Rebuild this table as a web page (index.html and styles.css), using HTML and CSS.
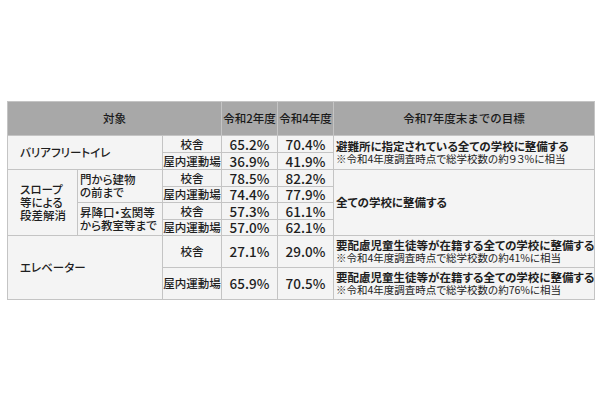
FILE: index.html
```html
<!DOCTYPE html>
<html lang="ja">
<head>
<meta charset="utf-8">
<link rel="stylesheet" href="styles.css">
</head>
<body>
<div class="wrap">
<table class="tbl">
  <colgroup>
    <col class="c1"><col class="c2"><col class="c3"><col class="c4"><col class="c5"><col class="c6">
  </colgroup>
  <thead>
    <tr class="hd">
      <th colspan="3">対象</th>
      <th>令和2年度</th>
      <th>令和4年度</th>
      <th>令和7年度末までの目標</th>
    </tr>
  </thead>
  <tbody>
    <tr class="r17">
      <td colspan="2" rowspan="2" class="lbl">バリアフリートイレ</td>
      <td class="sub">校舎</td>
      <td class="pct">65.2%</td>
      <td class="pct">70.4%</td>
      <td rowspan="2" class="goal"><div class="main">避難所に指定されている全ての学校に整備する</div><div class="note">※令和4年度調査時点で総学校数の約９３%に相当</div></td>
    </tr>
    <tr class="r17">
      <td class="sub">屋内運動場</td>
      <td class="pct">36.9%</td>
      <td class="pct">41.9%</td>
    </tr>
    <tr class="r17">
      <td rowspan="4" class="lbl lbl-multi">スロープ<br>等による<br>段差解消</td>
      <td rowspan="2" class="lbl2">門から建物<br>の前まで</td>
      <td class="sub">校舎</td>
      <td class="pct">78.5%</td>
      <td class="pct">82.2%</td>
      <td rowspan="4" class="goal"><div class="main">全ての学校に整備する</div></td>
    </tr>
    <tr class="r16">
      <td class="sub">屋内運動場</td>
      <td class="pct">74.4%</td>
      <td class="pct">77.9%</td>
    </tr>
    <tr class="r17">
      <td rowspan="2" class="lbl2">昇降口・玄関等<br>から教室等まで</td>
      <td class="sub">校舎</td>
      <td class="pct">57.3%</td>
      <td class="pct">61.1%</td>
    </tr>
    <tr class="r16">
      <td class="sub">屋内運動場</td>
      <td class="pct">57.0%</td>
      <td class="pct">62.1%</td>
    </tr>
    <tr class="r32">
      <td colspan="2" rowspan="2" class="lbl">エレベーター</td>
      <td class="sub">校舎</td>
      <td class="pct">27.1%</td>
      <td class="pct">29.0%</td>
      <td class="goal"><div class="main">要配慮児童生徒等が在籍する全ての学校に整備する</div><div class="note">※令和4年度調査時点で総学校数の約41%に相当</div></td>
    </tr>
    <tr class="r32">
      <td class="sub">屋内運動場</td>
      <td class="pct">65.9%</td>
      <td class="pct">70.5%</td>
      <td class="goal"><div class="main">要配慮児童生徒等が在籍する全ての学校に整備する</div><div class="note">※令和4年度調査時点で総学校数の約76%に相当</div></td>
    </tr>
  </tbody>
</table>
</div>
</body>
</html>
```
FILE: styles.css
```css
html, body {
  margin: 0;
  padding: 0;
  background: #ffffff;
}
body {
  font-family: "Noto Sans CJK JP", "Noto Sans", sans-serif;
  color: #1e1e1e;
}
.wrap {
  padding: 101px 0 0 7px;
}
.tbl {
  border-collapse: collapse;
  table-layout: fixed;
  width: 587px;
  font-size: 11.5px;
}
.c1 { width: 70px; }
.c2 { width: 85px; }
.c3 { width: 59px; }
.c4 { width: 56px; }
.c5 { width: 56px; }
.c6 { width: 261px; }
.tbl th, .tbl td {
  border: 1px solid #c4c4c4;
  padding: 0;
  background: #f4f4f4;
  line-height: 13px;
  white-space: nowrap;
}
.hd th {
  background: #a8a8a8;
  height: 33px;
  font-weight: 500;
  color: #1a1a1a;
  text-align: center;
}
.r17 td { height: 16px; }
.r16 td { height: 15px; }
.r32 td { height: 31px; }
.lbl {
  padding-left: 12px !important;
  text-align: left;
  font-weight: 500;
  font-feature-settings: "palt";
}
.lbl-multi {
  line-height: 13.5px;
}
.lbl2 {
  padding-left: 2px !important;
  text-align: left;
  font-weight: 500;
  line-height: 13px;
  font-feature-settings: "palt";
}
.sub {
  text-align: center;
  font-weight: 500;
}
.pct {
  text-align: center;
  font-size: 13.5px;
  font-weight: 500;
}
.goal {
  padding-left: 2px !important;
  text-align: left;
}
.main {
  font-weight: 700;
  font-size: 11.5px;
  line-height: 13px;
  font-feature-settings: "palt";
}
.note {
  font-size: 10.5px;
  line-height: 12px;
  font-weight: 400;
  font-feature-settings: "palt";
}
```
